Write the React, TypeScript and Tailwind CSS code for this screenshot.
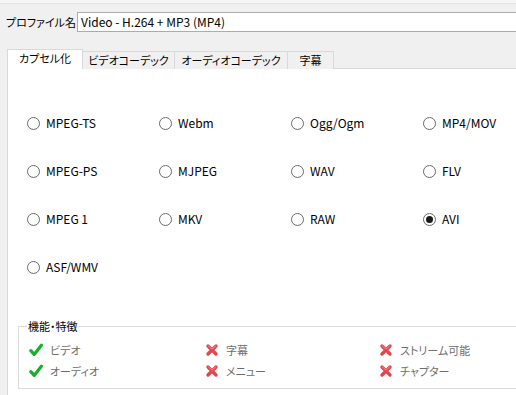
import * as React from 'react';

const containers = [
    ['MPEG-TS', 'Webm', 'Ogg/Ogm', 'MP4/MOV'],
    ['MPEG-PS', 'MJPEG', 'WAV', 'FLV'],
    ['MPEG 1', 'MKV', 'RAW', 'AVI'],
    ['ASF/WMV'],
];

const tabs = [
    { name: 'ビデオコーデック', width: 'w-[93px]' },
    { name: 'オーディオコーデック', width: 'w-[114px]' },
    { name: '字幕', width: 'w-[47px]' },
];

const features = [
    { name: 'ビデオ', ok: true },
    { name: '字幕', ok: false },
    { name: 'ストリーム可能', ok: false },
    { name: 'オーディオ', ok: true },
    { name: 'メニュー', ok: false },
    { name: 'チャプター', ok: false },
];

const CheckIcon = () => (
    <svg width="14" height="14" viewBox="0 0 14 14" className="shrink-0">
        <path d="M1.8 7.6 L5.2 11.4 L12.4 2.2" fill="none" stroke="#17b02a" strokeWidth="3.2" strokeLinecap="round" strokeLinejoin="round" />
    </svg>
);

const CrossIcon = () => (
    <svg width="14" height="14" viewBox="0 0 14 14" className="shrink-0">
        <path d="M3 3 L11 11 M11 3 L3 11" fill="none" stroke="#e2464d" strokeWidth="3.4" strokeLinecap="round" />
        <path d="M3.5 3 L7 6.2 L10.5 3" fill="none" stroke="#f49a9d" strokeWidth="0.8" strokeLinecap="round" />
    </svg>
);

const Radio = ({ label, checked }: { label: string; checked?: boolean }) => (
    <div className="flex items-center h-[16px]">
        <span className="flex items-center justify-center w-[13px] h-[13px] rounded-full border border-[#6b6b6b] bg-white">
            {checked && <span className="w-[7px] h-[7px] rounded-full bg-[#1a1a1a]" />}
        </span>
        <span className="ml-[6px] text-[12px] leading-[16px] text-black">{label}</span>
    </div>
);

export default function App() {
    return (
        <div
            className="w-[516px] h-[395px] overflow-hidden bg-[#f0f0f0] whitespace-nowrap [font-feature-settings:'palt']"
            style={{ fontFamily: '"Noto Sans CJK JP", "Liberation Sans", sans-serif' }}
        >
            <div className="h-[4px] border-b border-[#e4e4e4] bg-[#f6f6f6]" />
            {/* profile name */}
            <div className="flex items-center mt-[8px]">
                <span className="pl-[6px] w-[77px] shrink-0 text-[11px] leading-[16px] text-black">プロファイル名</span>
                <div className="flex items-center w-[460px] shrink-0 h-[20px] px-[3px] border border-[#acacac] bg-white text-[12px] leading-[16px] text-black">
                    Video - H.264 + MP3 (MP4)
                </div>
            </div>

            {/* tabs */}
            <div className="flex items-end h-[20px] mt-[17px] pl-[7px]">
                <div className="relative z-10 flex items-center justify-center w-[76px] shrink-0 h-[20px] pb-[2px] bg-white border-l border-t border-r border-[#d9d9d9] text-[11px] text-black">
                    カプセル化
                </div>
                {tabs.map((t) => (
                    <div
                        key={t.name}
                        className={`${t.width} shrink-0 -ml-px flex items-center justify-center h-[18px] bg-[#f0f0f0] border-l border-t border-r border-[#d9d9d9] text-[11px] text-black`}
                    >
                        {t.name}
                    </div>
                ))}
            </div>

            {/* panel */}
            <div className="ml-[7px] -mt-px w-[530px] h-[340px] bg-white border border-[#d9d9d9]">
                <div className="pt-[46px] pl-[19px] grid grid-cols-[132px_132px_132px_132px] auto-rows-[16px] gap-y-[32px]">
                    {containers.map((row) =>
                        row.map((c) => <Radio key={c} label={c} checked={c === 'AVI'} />)
                    )}
                </div>

                <fieldset className="ml-[10px] mt-[43px] w-[520px] h-[71px] border border-[#dcdcdc]">
                    <legend className="ml-[8px] px-[1px] text-[11px] leading-[16px] text-black">機能・特徴</legend>
                    <div className="grid grid-cols-[176px_174px_auto] gap-y-[7px] pl-[10px] pt-[9px]">
                        {features.map((f) => (
                            <div key={f.name} className="flex items-center h-[14px]">
                                {f.ok ? <CheckIcon /> : <CrossIcon />}
                                <span className="ml-[7px] text-[11px] leading-[16px] text-[#6d6d6d]">{f.name}</span>
                            </div>
                        ))}
                    </div>
                </fieldset>
            </div>
        </div>
    );
}
